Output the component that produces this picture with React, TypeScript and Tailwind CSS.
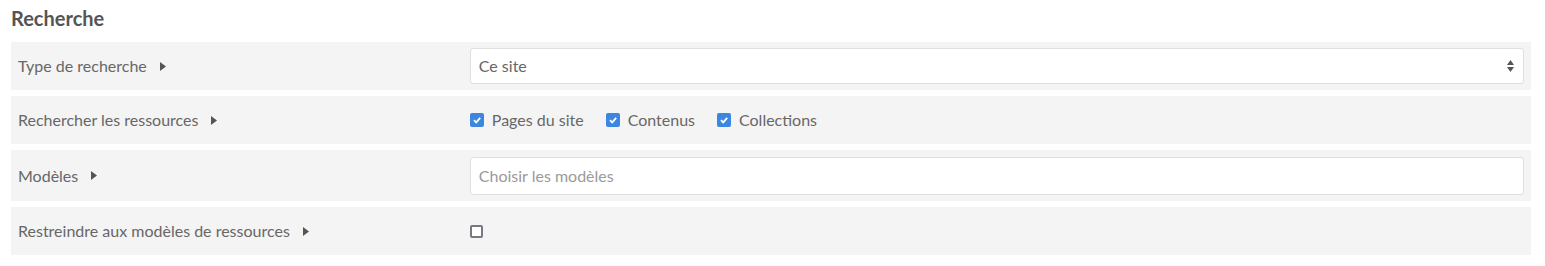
export default function App() {
  const caret = (
    <svg width="6" height="9" viewBox="0 0 6 9" className="ml-[13px] inline-block">
      <path d="M0 0 L6 4.5 L0 9 Z" fill="#555555" />
    </svg>
  );

  const Check = ({ checked }: { checked: boolean }) =>
    checked ? (
      <span className="flex h-[14px] w-[14px] items-center justify-center rounded-[2px] bg-[#3b86e0]">
        <svg width="10" height="10" viewBox="0 0 10 10">
          <path d="M2 5.2 L4.2 7.4 L8.2 2.8" stroke="white" strokeWidth="1.8" fill="none" />
        </svg>
      </span>
    ) : (
      <span className="h-[13px] w-[13px] rounded-[2px] border-2 border-[#7a7682] bg-white" />
    );

  const rows: { label: string; h: string; content: React.ReactNode }[] = [
    {
      label: "Type de recherche",
      h: "h-[48px]",
      content: (
        <div className="flex h-[36px] items-center justify-between rounded-[3px] border border-[#dfdfdf] bg-white pl-2 pr-2">
          <span className="text-[16px] text-[#676767]">Ce site</span>
          <svg width="9" height="14" viewBox="0 0 9 14">
            <path d="M4.5 1 L8 6 L1 6 Z" fill="#555555" />
            <path d="M1 8 L8 8 L4.5 13 Z" fill="#555555" />
          </svg>
        </div>
      ),
    },
    {
      label: "Rechercher les ressources",
      h: "h-[48px]",
      content: (
        <div className="flex items-center gap-[22px] text-[16px] text-[#676767]">
          {["Pages du site", "Contenus", "Collections"].map((t) => (
            <label key={t} className="flex items-center gap-[8px]">
              <Check checked />
              <span>{t}</span>
            </label>
          ))}
        </div>
      ),
    },
    {
      label: "Modèles",
      h: "h-[51px]",
      content: (
        <div className="flex h-[38px] items-center rounded-[3px] border border-[#dfdfdf] bg-white pl-2">
          <span className="text-[16px] text-[#9a9a9a]">Choisir les modèles</span>
        </div>
      ),
    },
    {
      label: "Restreindre aux modèles de ressources",
      h: "h-[48px]",
      content: (
        <div className="flex items-center">
          <Check checked={false} />
        </div>
      ),
    },
  ];

  return (
    <div className="bg-white pl-[11px] pr-[14px] pt-[4px] font-['Lato','Liberation_Sans',sans-serif]">
      <h2 className="mb-[10px] text-[20px] font-bold leading-[28px] text-[#555555]">Recherche</h2>
      <div className="flex flex-col gap-[6px]">
        {rows.map((r) => (
          <div key={r.label} className={`grid grid-cols-[30%_70%] items-center bg-[#f4f4f4] px-[7px] ${r.h}`}>
            <div className="flex items-center text-[16px] text-[#676767]">
              {r.label}
              {caret}
            </div>
            <div>{r.content}</div>
          </div>
        ))}
      </div>
    </div>
  );
}
